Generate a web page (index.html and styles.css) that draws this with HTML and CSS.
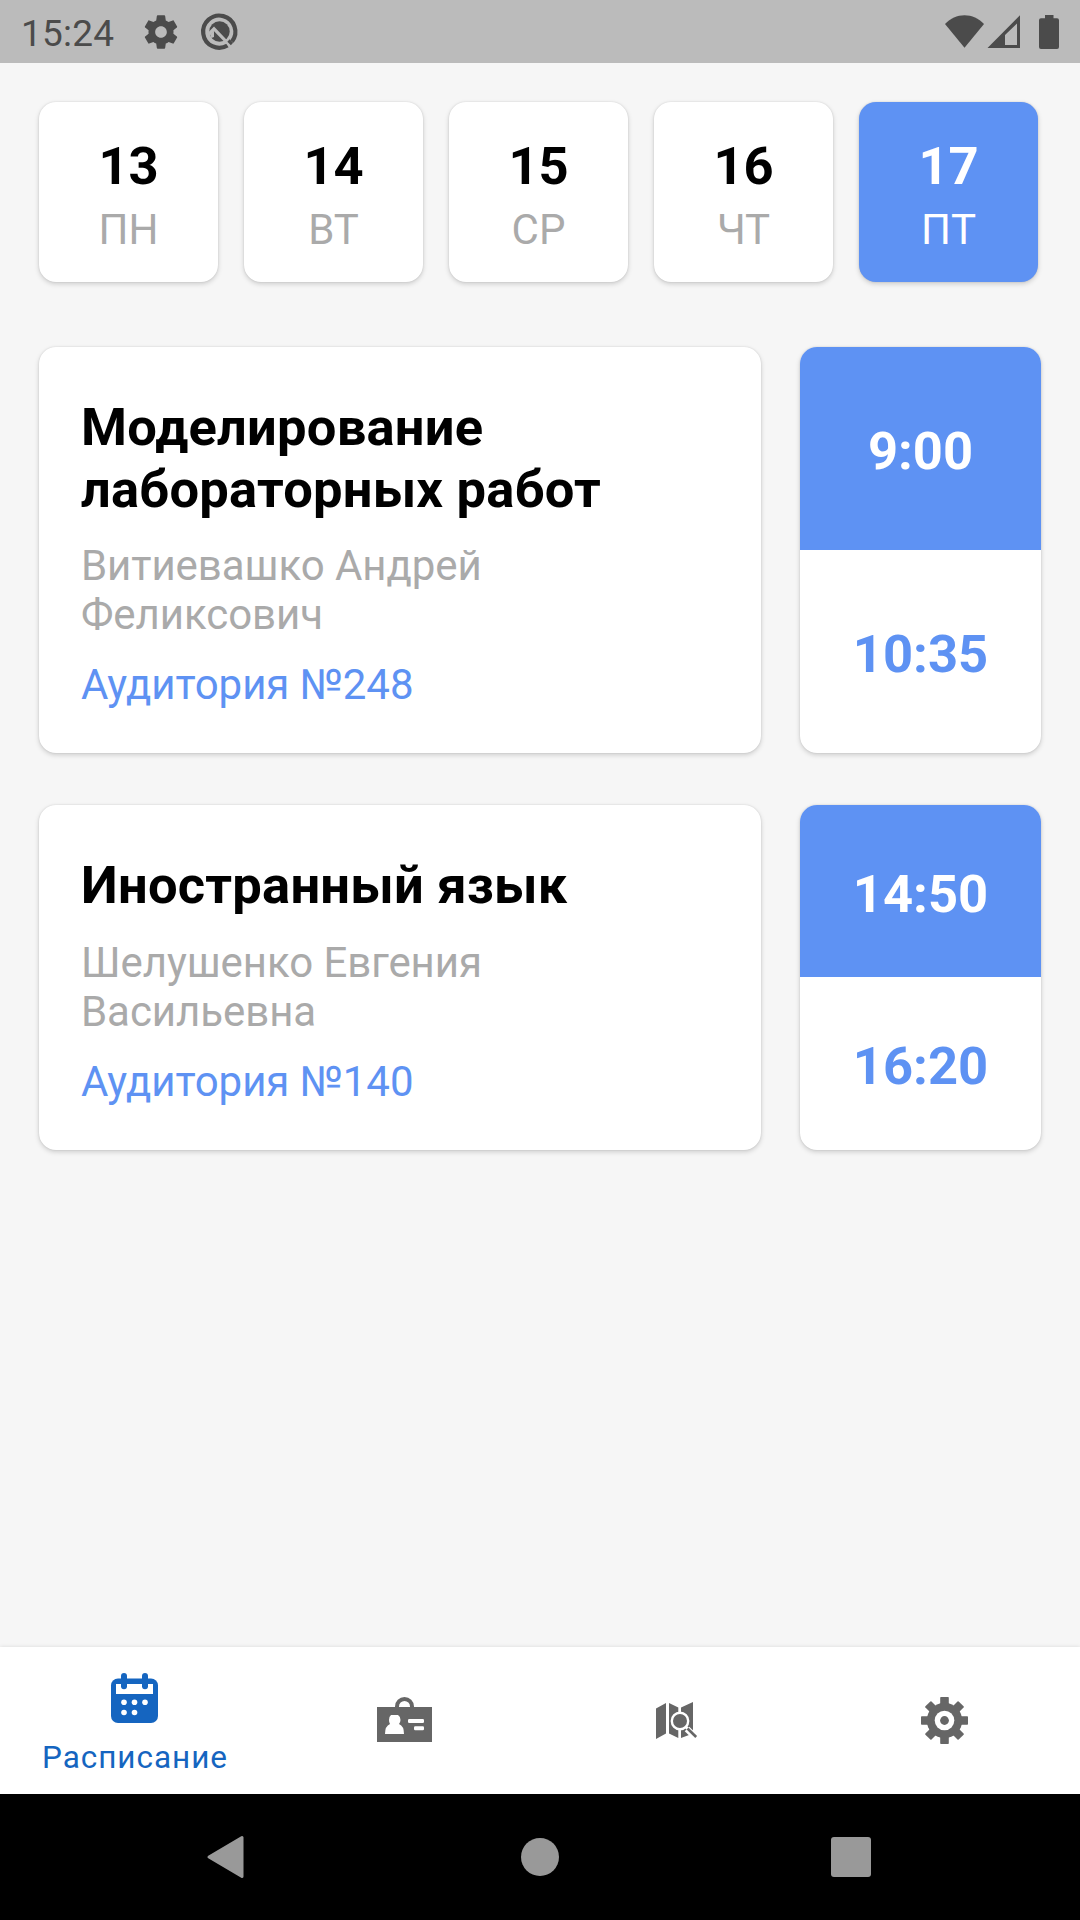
FILE: index.html
```html
<!DOCTYPE html>
<html lang="ru">
<head>
<meta charset="utf-8">
<title>Расписание</title>
<link rel="stylesheet" href="styles.css">
</head>
<body>
<div class="screen">
  <header class="status">
    <span class="clock">15:24</span>
    <svg class="status-gear" width="40" height="40" viewBox="0 0 24 24"><path d="M19.43 12.98c.04-.32.07-.64.07-.98s-.03-.66-.07-.98l2.11-1.65c.19-.15.24-.42.12-.64l-2-3.46c-.12-.22-.39-.3-.61-.22l-2.49 1c-.52-.4-1.08-.73-1.69-.98l-.38-2.65C14.46 2.18 14.25 2 14 2h-4c-.25 0-.46.18-.49.42l-.38 2.65c-.61.25-1.17.59-1.69.98l-2.49-1c-.23-.09-.49 0-.61.22l-2 3.46c-.13.22-.07.49.12.64l2.11 1.65c-.04.32-.07.65-.07.98s.03.66.07.98l-2.11 1.65c-.19.15-.24.42-.12.64l2 3.46c.12.22.39.3.61.22l2.49-1c.52.4 1.08.73 1.69.98l.38 2.65c.03.24.24.42.49.42h4c.25 0 .46-.18.49-.42l.38-2.65c.61-.25 1.17-.59 1.69-.98l2.49 1c.23.09.49 0 .61-.22l2-3.46c.12-.22.07-.49-.12-.64l-2.11-1.65zM12 15.5c-1.93 0-3.5-1.57-3.5-3.5s1.57-3.5 3.5-3.5 3.5 1.57 3.5 3.5-1.57 3.5-3.5 3.5z"/></svg>
    <svg class="status-q" width="37" height="37" viewBox="0 0 37 37">
      <path d="M31 28.500A16.100 16.100 0 1 0 26.500 32.500" fill="none" stroke="#4b4b4b" stroke-width="4.2"/>
      <circle cx="18.5" cy="18.5" r="10.2"/>
      <path d="M6.500 22.300L13 15.800L29 32.500" fill="none" stroke="#bbb" stroke-width="3.2"/>
      <path d="M9 21.500L13 17.500V24L10.500 25z" fill="#bbb"/>
      <path d="M27.500 27.500l3.500 3.500" stroke="#4b4b4b" stroke-width="3.2"/>
    </svg>
    <span class="spacer"></span>
    <svg width="115" height="34" viewBox="945 14 115 34">
      <path d="M964.5 46.8L945 23C950.500 17.500 957 14.200 964.500 14.200S978.500 17.500 984 23z"/>
      <path fill-rule="evenodd" d="M987.500 47L1020 14.200V47zM1005 44H1017V22.500L1005 34z"/>
      <path d="M1045 14h8.500v3.300h3.500a2 2 0 0 1 2 2v26.700a2 2 0 0 1-2 2h-16a2 2 0 0 1-2-2v-26.700a2 2 0 0 1 2-2h4z"/>
    </svg>
  </header>

  <main class="content">
    <div class="days">
      <div class="day"><b>13</b><span>ПН</span></div>
      <div class="day"><b>14</b><span>ВТ</span></div>
      <div class="day"><b>15</b><span>СР</span></div>
      <div class="day"><b>16</b><span>ЧТ</span></div>
      <div class="day active"><b>17</b><span>ПТ</span></div>
    </div>

    <section class="lesson">
      <div class="info">
        <h2>Моделирование лабораторных работ</h2>
        <p class="teacher">Витиевашко Андрей Феликсович</p>
        <p class="room">Аудитория №248</p>
      </div>
      <div class="times"><div class="start">9:00</div><div class="end">10:35</div></div>
    </section>

    <section class="lesson">
      <div class="info">
        <h2>Иностранный язык</h2>
        <p class="teacher">Шелушенко Евгения Васильевна</p>
        <p class="room">Аудитория №140</p>
      </div>
      <div class="times"><div class="start">14:50</div><div class="end">16:20</div></div>
    </section>
  </main>

  <nav class="tabs">
    <div class="tab selected">
      <svg width="48" height="50" viewBox="0 0 48 50">
        <rect x="0" y="5.500" width="47" height="44.500" rx="7"/>
        <path d="M5 11H42V21H5z" fill="#fff"/>
        <rect x="10" y="0" width="6" height="16.300" rx="3"/>
        <rect x="31" y="0" width="6" height="16.300" rx="3"/>
        <g fill="#fff"><circle cx="13" cy="29.200" r="2.800"/><circle cx="23.500" cy="29.200" r="2.800"/><circle cx="34" cy="29.200" r="2.800"/><circle cx="13" cy="39.500" r="2.800"/><circle cx="23.500" cy="39.500" r="2.800"/></g>
      </svg>
      <span>Расписание</span>
    </div>
    <div class="tab badge">
      <svg width="55" height="45" viewBox="0 0 55 45">
        <path d="M20 11V9.500a7.500 7.500 0 0 1 15 0V11" fill="none" stroke="#666" stroke-width="4"/>
        <rect y="10" width="55" height="35"/>
        <g fill="#fff">
          <path d="M14 18h7q2.500 1.500 2.500 5q0 2-1.500 4q5 2 5 10H8q0-8 5-10q-1-1.500-1-4q0-3.500 2-5z"/>
          <rect x="31" y="22" width="16" height="4" rx="1.200"/><rect x="37" y="29.300" width="10" height="4" rx="1.200"/>
        </g>
      </svg>
    </div>
    <div class="tab map">
      <svg width="41" height="38" viewBox="0 0 41 38">
        <path d="M0 6.500L10 1V31.500L0 37zM13 1L22.300 5.500V36L13 31.500zM25 5.500L37 0V31.500L25 36z"/>
        <path d="M31 27L39.800 35.500" stroke="#fff" stroke-width="6.500"/>
        <circle cx="24" cy="19" r="8.200" stroke="#fff" stroke-width="2.400"/>
        <path d="M30 25L34 29" stroke="#fff" stroke-width="2.800"/>
        <path d="M31.500 26.500L40.200 35" stroke="#666" stroke-width="2.600"/>
      </svg>
    </div>
    <div class="tab settings">
      <svg width="47" height="47" viewBox="-23.500 -23.500 47 47">
        <circle r="17.700"/>
        <rect x="-4.300" y="-23.500" width="8.600" height="47" rx=".8"/>
        <rect x="-23.500" y="-4.300" width="47" height="8.600" rx=".8"/>
        <g transform="rotate(45)"><rect x="-4.300" y="-23.500" width="8.600" height="47" rx=".8"/><rect x="-23.500" y="-4.300" width="47" height="8.600" rx=".8"/></g>
        <circle r="9.800" fill="#fff"/><circle r="4.400"/>
      </svg>
    </div>
  </nav>

  <footer class="sysnav">
    <svg width="38" height="42" viewBox="0 0 38 42"><path d="M35 1.500V40.500L2 21z" stroke="#999" stroke-width="3" stroke-linejoin="round"/></svg>
    <svg width="38" height="38" viewBox="0 0 38 38"><circle cx="19" cy="19" r="19"/></svg>
    <svg width="40" height="40" viewBox="0 0 40 40"><rect width="40" height="40" rx="3"/></svg>
  </footer>
</div>
</body>
</html>
```
FILE: styles.css
```css
* { box-sizing: border-box; }
body { margin: 0; font-family: Roboto, "Noto Sans", sans-serif; background: #f6f6f6; }
h2, p { margin: 0; }
svg { display: block; flex: none; overflow: visible; }

.screen { width: 1080px; height: 1920px; display: flex; flex-direction: column; background: #f6f6f6; }

.status { height: 63px; background: #bbb; display: flex; align-items: center; padding: 0 20px 0 21px; color: #4b4b4b; }
.status svg { fill: #4b4b4b; }
.clock { font-size: 37px; line-height: 43px; width: 120px; padding-top: 3px; letter-spacing: .2px; }
.status-q { margin-left: 20px; }
.spacer { flex: 1; }

.content { flex: 1; padding: 39px 39px 0; }
.days { display: flex; gap: 26px; margin-bottom: 65px; }
.day { width: 179px; height: 180px; padding-top: 34px; display: flex; flex-direction: column; align-items: center; gap: 7px; }
.day, .info, .times { background: #fff; border-radius: 17px; box-shadow: 0 2px 5px rgba(0,0,0,.17), 0 0 2px rgba(0,0,0,.12); }
.day b { font-size: 52.5px; line-height: 61.5px; }
.day span { font-size: 42px; line-height: 49px; color: #aaa; }
.day.active { background: #5e92f3; color: #fff; }
.day.active span { color: #fff; }

.lesson { display: flex; gap: 39px; margin-bottom: 52px; }
.info { width: 722px; padding: 50px 42px 44px; }
.info h2 { font-size: 52.5px; line-height: 61.5px; font-weight: 700; margin-bottom: 21px; letter-spacing: .22px; }
.info p { font-size: 42px; line-height: 49px; letter-spacing: -.06px; }
.info .teacher { color: #aaa; margin-bottom: 21px; }
.info .room { color: #5e92f3; }
.times { width: 241px; overflow: hidden; display: flex; flex-direction: column; font-size: 52.5px; font-weight: 700; }
.times div { flex: 1; display: flex; align-items: center; justify-content: center; padding-top: 5px; }
.start { background: #5e92f3; color: #fff; }
.end { color: #5e92f3; }

.tabs { height: 147px; background: #fff; display: grid; grid-template-columns: repeat(4, 1fr); box-shadow: 0 0 4px rgba(0,0,0,.12); }
.tab { display: flex; flex-direction: column; align-items: center; justify-content: center; }
.tab svg { fill: #666; }
.tab.badge { padding: 0 2px 2px 0; }
.tab.map { padding-left: 2px; }
.tab.settings { padding-right: 2px; }
.tab.selected { color: #1565c0; justify-content: flex-start; padding-top: 26px; }
.tab.selected svg { fill: #1565c0; }
.tab span { font-size: 31.5px; line-height: 37px; letter-spacing: .95px; margin-top: 16px; }

.sysnav { height: 126px; background: #000; display: flex; align-items: center; justify-content: space-between; padding: 0 209px 0 207px; }
.sysnav svg { fill: #999; }
.sysnav svg:nth-child(2) { margin-left: 4px; }
```
